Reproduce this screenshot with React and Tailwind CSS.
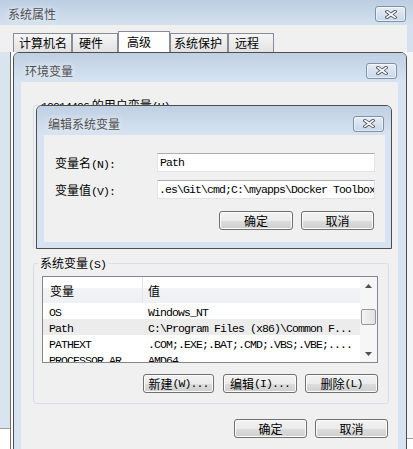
import React from "react";

function L({ children }) {
  return (
    <span className="font-['Liberation_Mono',monospace] text-[11.5px] leading-[10px] tracking-[-0.9px]">
      {children}
    </span>
  );
}

function CloseBtn() {
  return (
    <div className="flex h-[16px] w-[31px] shrink-0 items-center justify-center rounded-[3px] border border-[#7d91ab] bg-[linear-gradient(to_bottom,#e6edf6,#c8d7e9)] shadow-[inset_0_0_0_1px_rgba(255,255,255,0.55)]">
      <svg width="12" height="9" viewBox="0 0 12 9">
        <path d="M2 1.5 L10 7.5 M10 1.5 L2 7.5" stroke="#4f5560" strokeWidth="3.4" strokeLinecap="square" fill="none" />
        <path d="M2 1.5 L10 7.5 M10 1.5 L2 7.5" stroke="#ffffff" strokeWidth="1.6" strokeLinecap="square" fill="none" />
      </svg>
    </div>
  );
}

function Btn({ children, className }) {
  return (
    <div
      className={
        "flex h-[19px] items-center justify-center rounded-[3px] border border-[#707070] bg-[linear-gradient(to_bottom,#f3f3f3_0%,#ebebeb_50%,#dddddd_51%,#cfcfcf_100%)] shadow-[inset_0_0_0_1px_#fcfcfc] " +
        className
      }
    >
      {children}
    </div>
  );
}

function Tab({ children, className }) {
  return (
    <div
      className={
        "flex items-center border border-b-0 border-[#898c95] " + className
      }
    >
      {children}
    </div>
  );
}

const rows = [
  { n: "OS", v: "Windows_NT", sel: false },
  { n: "Path", v: "C:\\Program Files (x86)\\Common F...", sel: true },
  { n: "PATHEXT", v: ".COM;.EXE;.BAT;.CMD;.VBS;.VBE;....", sel: false },
  { n: "PROCESSOR_AR...", v: "AMD64", sel: false },
];

export default function App() {
  return (
    <div className="relative h-[449px] w-[413px] overflow-hidden bg-[#f0f0f0] font-['Noto_Sans_CJK_SC','Noto_Sans',sans-serif] text-[12px] leading-[14px] text-black">
      {/* System properties window */}
      <div className="flex h-full flex-col">
        <div className="flex h-[25px] shrink-0 items-center justify-between bg-[linear-gradient(to_bottom,#bccee2,#d4e1ef)] pl-[8px] pr-[7px] pt-[3px]">
          <span className="text-[#505050] [text-shadow:0_0_6px_#ffffff]">系统属性</span>
          <CloseBtn />
        </div>
        <div className="flex flex-1">
          <div className="flex flex-1 flex-col">
            <div className="flex h-[27px] shrink-0 items-end pl-[13px]">
              <Tab className="h-[19px] w-[59px] bg-[linear-gradient(to_bottom,#f6f6f6,#e2e2e2)] pl-[5px]">计算机名</Tab>
              <Tab className="h-[19px] w-[46px] bg-[linear-gradient(to_bottom,#f6f6f6,#e2e2e2)] pl-[6px]">硬件</Tab>
              <Tab className="h-[21px] w-[52px] bg-white pl-[8px]">高级</Tab>
              <Tab className="h-[19px] w-[58px] bg-[linear-gradient(to_bottom,#f6f6f6,#e2e2e2)] pl-[3px]">系统保护</Tab>
              <Tab className="h-[19px] w-[46px] bg-[linear-gradient(to_bottom,#f6f6f6,#e2e2e2)] pl-[6px]">远程</Tab>
            </div>
            <div className="flex flex-1">
              <div className="flex w-[11px] flex-col border-r border-[#6e6e6e]">
                <div className="h-[376px] bg-[#dae4ef]" />
                <div className="flex-1 border-t border-[#a0a0a0] bg-white" />
              </div>
              <div className="flex-1 bg-white" />
            </div>
          </div>
          <div className="flex w-[6px] flex-col">
            <div className="h-[27px] bg-[#d5e1ee]" />
            <div className="h-[386px] bg-[#f4f5f6]" />
            <div className="flex-1 border-t border-[#a0a0a0] bg-white" />
          </div>
        </div>
      </div>

      {/* Environment variables dialog */}
      <div className="absolute left-[13px] top-[52px] flex h-[420px] w-[394px] flex-col rounded-t-[6px] border border-[#4d4d4d] bg-[#d7e3f0]">
        <div className="flex h-[29px] shrink-0 items-center justify-between rounded-t-[5px] bg-[linear-gradient(to_bottom,#bfd0e3,#d7e3f0)] pl-[11px] pr-[9px] pt-[6px]">
          <span className="text-[#505050] [text-shadow:0_0_6px_#ffffff]">环境变量</span>
          <CloseBtn />
        </div>
        <div className="ml-[7px] mr-[8px] flex flex-1 flex-col bg-[#f0f0f0] pl-[12px] pr-[9px] pt-[16px]">
          <fieldset className="h-[151px] rounded-[3px] border border-[#d5dfe5]">
            <legend className="ml-[5px] h-[14px] px-[2px] leading-[14px]">
              <L>10014406</L> 的用户变量<L>(U)</L>
            </legend>
          </fieldset>
          <fieldset className="mt-[7px] h-[148px] rounded-[3px] border border-[#d5dfe5]">
            <legend className="ml-[4px] h-[14px] px-[2px] leading-[14px]">
              系统变量<L>(S)</L>
            </legend>
            <div className="flex flex-col pl-[8px] pt-[6px]">
              <div className="flex h-[87px] w-[336px] overflow-hidden border border-[#828790] bg-white">
                <div className="flex min-w-0 flex-1 flex-col">
                  <div className="flex h-[26px] shrink-0 bg-[linear-gradient(to_bottom,#ffffff_0%,#ffffff_42%,#f1f3f6_43%,#eef0f4_100%)]">
                    <div className="flex w-[100px] items-center border-r border-[#e2e4e8] pl-[7px] pt-[2px]">变量</div>
                    <div className="flex flex-1 items-center pl-[5px] pt-[2px]">值</div>
                  </div>
                  {rows.map((r) => (
                    <div
                      key={r.n}
                      className={
                        "flex h-[16px] shrink-0 items-center whitespace-nowrap " +
                        (r.sel ? "bg-[#ececec]" : "bg-white")
                      }
                    >
                      <div className="w-[100px] overflow-hidden pl-[6px]">
                        <L>{r.n}</L>
                      </div>
                      <div className="flex-1 overflow-hidden pl-[5px]">
                        <L>{r.v}</L>
                      </div>
                    </div>
                  ))}
                </div>
                <div className="flex w-[17px] shrink-0 flex-col bg-[#f6f6f6]">
                  <div className="flex h-[17px] items-center justify-center">
                    <svg width="7" height="4" viewBox="0 0 7 4">
                      <polygon points="0,4 3.5,0 7,4" fill="#505050" />
                    </svg>
                  </div>
                  <div className="flex-1 pt-[15px]">
                    <div className="mx-auto h-[16px] w-[15px] rounded-[2px] border border-[#979797] bg-[linear-gradient(to_right,#f4f4f4,#e2e2e2)]" />
                  </div>
                  <div className="flex h-[17px] items-center justify-center">
                    <svg width="7" height="4" viewBox="0 0 7 4">
                      <polygon points="0,0 7,0 3.5,4" fill="#505050" />
                    </svg>
                  </div>
                </div>
              </div>
              <div className="mt-[11px] flex w-[336px] justify-end">
                <Btn className="w-[71px]">新建<L>(W)...</L></Btn>
                <Btn className="ml-[9px] w-[74px]">编辑<L>(I)...</L></Btn>
                <Btn className="ml-[8px] w-[73px]">删除<L>(L)</L></Btn>
              </div>
            </div>
          </fieldset>
          <div className="mt-[15px] flex justify-end gap-[8px] pr-[1px]">
            <Btn className="w-[73px]">确定</Btn>
            <Btn className="w-[73px]">取消</Btn>
          </div>
        </div>
      </div>

      {/* Edit system variable dialog */}
      <div className="absolute left-[36px] top-[105px] flex h-[144px] w-[356px] flex-col rounded-t-[6px] border border-[#4d4d4d] bg-[#d7e3f0]">
        <div className="flex h-[29px] shrink-0 items-center justify-between rounded-t-[5px] bg-[linear-gradient(to_bottom,#bfd0e3,#d7e3f0)] pl-[11px] pr-[7px] pt-[6px]">
          <span className="text-[#505050] [text-shadow:0_0_6px_#ffffff]">编辑系统变量</span>
          <CloseBtn />
        </div>
        <div className="mb-[6px] ml-[7px] mr-[6px] flex flex-1 flex-col bg-[#f0f0f0] pl-[11px] pr-[10px] pt-[18px]">
          <div className="flex items-center">
            <div className="w-[102px]">
              变量名<L>(N):</L>
            </div>
            <div className="flex h-[19px] w-[218px] items-center overflow-hidden whitespace-nowrap border border-[#e2e3ea] border-t-[#abadb3] bg-white pl-[2px]">
              <L>Path</L>
            </div>
          </div>
          <div className="mt-[8px] flex items-center">
            <div className="w-[102px]">
              变量值<L>(V):</L>
            </div>
            <div className="flex h-[19px] w-[218px] items-center overflow-hidden whitespace-nowrap border border-[#e2e3ea] border-t-[#abadb3] bg-white pl-[1px]">
              <L>.es\Git\cmd;C:\myapps\Docker Toolbox</L>
            </div>
          </div>
          <div className="mt-[12px] flex justify-end gap-[8px] pr-[1px]">
            <Btn className="w-[74px]">确定</Btn>
            <Btn className="w-[73px]">取消</Btn>
          </div>
        </div>
      </div>
    </div>
  );
}
